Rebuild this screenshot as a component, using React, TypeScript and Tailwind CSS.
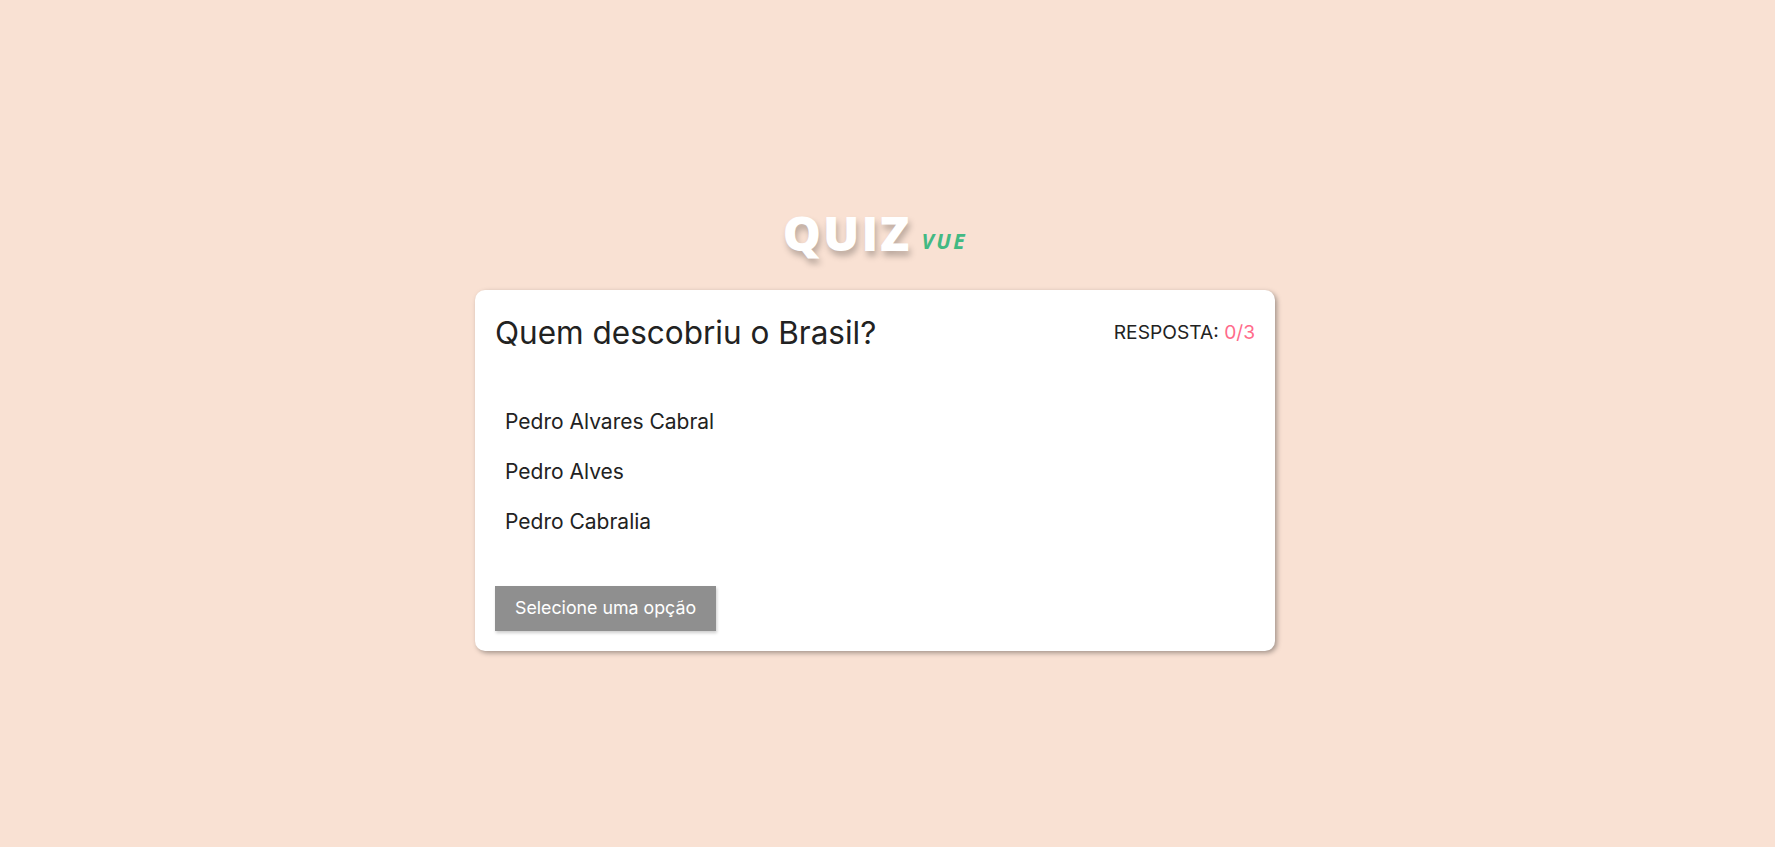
import React from "react";

export default function App() {
  const options = ["Pedro Alvares Cabral", "Pedro Alves", "Pedro Cabralia"];
  return (
    <div className="min-h-[847px] w-full bg-[#f9e1d3] flex items-center justify-center pr-[25px] pt-[9px] font-['Inter','Open_Sans',sans-serif]">
      <div className="flex flex-col items-center">
        <div className="flex items-end mb-[30px]">
          <span className="text-[48px] leading-[54px] font-extrabold text-white tracking-[2px] font-['Open_Sans',sans-serif] [text-shadow:2px_5px_6px_rgba(0,0,0,0.25)]">
            QUIZ
          </span>
          <span className="ml-[10px] mb-[7px] text-[21px] leading-[24px] font-bold italic text-[#42b983] tracking-[2.5px] font-['Open_Sans',sans-serif]">
            VUE
          </span>
        </div>
        <div className="w-[800px] bg-white rounded-[10px] shadow-[2px_2px_5px_rgba(0,0,0,0.35)] p-[20px]">
          <div className="flex items-center justify-between h-[45px]">
            <h1 className="text-[31.5px] leading-[45px] text-[#222] font-normal">Quem descobriu o Brasil?</h1>
            <div className="text-[19.2px] text-[#222]">
              RESPOSTA: <span className="text-[#ff6b8b]">0/3</span>
            </div>
          </div>
          <ul className="mt-[42px] flex flex-col">
            {options.map((o) => (
              <li key={o} className="h-[50px] flex items-center px-[10px] text-[21px] text-[#222]">
                {o}
              </li>
            ))}
          </ul>
          <button className="mt-[39px] h-[45px] px-[20px] bg-[#8f8f8f] text-white text-[17.8px] shadow-[1px_2px_3px_rgba(0,0,0,0.2)]">
            Selecione uma opção
          </button>
        </div>
      </div>
    </div>
  );
}
